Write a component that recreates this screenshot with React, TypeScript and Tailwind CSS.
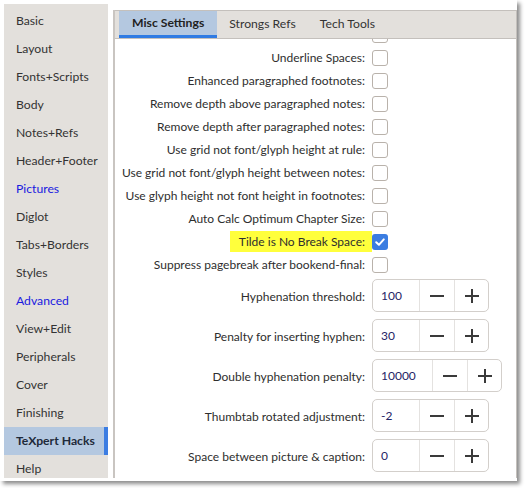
import React from "react";

const sideItems: { label: string; blue?: boolean; active?: boolean }[] = [
  { label: "Basic" },
  { label: "Layout" },
  { label: "Fonts+Scripts" },
  { label: "Body" },
  { label: "Notes+Refs" },
  { label: "Header+Footer" },
  { label: "Pictures", blue: true },
  { label: "Diglot" },
  { label: "Tabs+Borders" },
  { label: "Styles" },
  { label: "Advanced", blue: true },
  { label: "View+Edit" },
  { label: "Peripherals" },
  { label: "Cover" },
  { label: "Finishing" },
  { label: "TeXpert Hacks", active: true },
  { label: "Help" },
];

const checkRows: { label: string; checked?: boolean; highlight?: boolean }[] = [
  { label: "" },
  { label: "Underline Spaces:" },
  { label: "Enhanced paragraphed footnotes:" },
  { label: "Remove depth above paragraphed notes:" },
  { label: "Remove depth after paragraphed notes:" },
  { label: "Use grid not font/glyph height at rule:" },
  { label: "Use grid not font/glyph height between notes:" },
  { label: "Use glyph height not font height in footnotes:" },
  { label: "Auto Calc Optimum Chapter Size:" },
  { label: "Tilde is No Break Space:", checked: true, highlight: true },
  { label: "Suppress pagebreak after bookend-final:" },
];

const spinRows: { label: string; value: string; wide?: boolean }[] = [
  { label: "Hyphenation threshold:", value: "100" },
  { label: "Penalty for inserting hyphen:", value: "30" },
  { label: "Double hyphenation penalty:", value: "10000", wide: true },
  { label: "Thumbtab rotated adjustment:", value: "-2" },
  { label: "Space between picture & caption:", value: "0" },
];

function Checkbox({ checked }: { checked?: boolean }) {
  if (checked) {
    return (
      <div className="w-[16px] h-[16px] rounded-[3px] bg-[#3b7de1] flex items-center justify-center shrink-0">
        <svg width="12" height="12" viewBox="0 0 12 12">
          <path d="M2.2 6.2 L4.9 8.8 L9.8 3.4" fill="none" stroke="#ffffff" strokeWidth="2" strokeLinecap="round" strokeLinejoin="round" />
        </svg>
      </div>
    );
  }
  return <div className="w-[16px] h-[16px] rounded-[3px] border border-[#b9b2ab] bg-white shrink-0" />;
}

function Minus() {
  return (
    <svg width="16" height="16" viewBox="0 0 16 16">
      <path d="M1 8 H15" stroke="#3a3a3a" strokeWidth="2" />
    </svg>
  );
}
function Plus() {
  return (
    <svg width="16" height="16" viewBox="0 0 16 16">
      <path d="M1 8 H15 M8 1 V15" stroke="#3a3a3a" strokeWidth="2" />
    </svg>
  );
}

export default function App() {
  return (
    <div className="w-[526px] h-[488px] bg-white font-['Lato','Noto_Sans',sans-serif] text-[#2e2e2e] text-[12px] overflow-hidden whitespace-nowrap">
      <div className="w-[517px] h-[481px] bg-white shadow-[3px_3px_4px_rgba(0,0,0,0.45)] flex pl-[4px] pt-[4px] pb-[3px]">
        {/* Sidebar */}
        <div className="w-[104px] bg-[#e3e0dc] pt-[3px] flex flex-col shrink-0 overflow-hidden">
          {sideItems.map((it) => (
            <div
              key={it.label}
              className={
                "h-[28px] shrink-0 flex items-center pl-[12px] relative text-[12.2px] " +
                (it.active ? "bg-[#b4c8e0] font-bold text-[#1e2a3a]" : it.blue ? "text-[#1a1ae0]" : "text-[#333333]")
              }
            >
              {it.label}
              {it.active && <div className="absolute right-0 top-0 bottom-0 w-[4px] bg-[#3c7de2]" />}
            </div>
          ))}
        </div>
        <div className="w-[5px] shrink-0" />
        {/* Main panel */}
        <div className="flex-1 mt-[6px] flex flex-col border-l-2 border-l-[#c9c5c1] border-r border-r-[#c4c0bc] overflow-hidden">
          <div className="h-[29px] bg-[#e3e0dc] border-t border-t-[#c4c0bc] border-b border-b-[#c4c0bc] flex pl-[4px] shrink-0 text-[12.2px]">
            <div className="h-[27px] px-[13px] bg-[#b4c8e0] font-bold text-[#222222] flex items-center border-b-[3px] border-b-[#2f7be3]">
              Misc Settings
            </div>
            <div className="h-[27px] px-[12px] flex items-center text-[#333333]">Strongs Refs</div>
            <div className="h-[27px] px-[12px] flex items-center text-[#333333]">Tech Tools</div>
          </div>
          <div className="flex-1 overflow-hidden bg-white">
            <div className="mt-[-16px] flex flex-col">
              {checkRows.map((r, i) => (
                <div key={i} className="h-[23px] flex items-center">
                  <div className="w-[257px] flex justify-end shrink-0">
                    <span
                      className={
                        "h-[21px] flex items-center pr-[7px] pt-[1px] " + (r.highlight ? "bg-[#ffff3c] pl-[9px]" : "")
                      }
                    >
                      {r.label}
                    </span>
                  </div>
                  <Checkbox checked={r.checked} />
                </div>
              ))}
              <div className="mt-[3px] flex flex-col gap-[7px]">
                {spinRows.map((r) => (
                  <div key={r.label} className="h-[33px] flex items-center">
                    <div className="w-[257px] pr-[7px] pt-[2px] text-right shrink-0">{r.label}</div>
                    <div className="h-[33px] flex border border-[#d3cfcb] rounded-[5px] bg-white">
                      <div className={(r.wide ? "w-[59px]" : "w-[46px]") + " flex items-center pl-[8px] pt-[1px] text-[#1f2466]"}>
                        {r.value}
                      </div>
                      <div className="w-[35px] border-l border-l-[#e4e2e0] flex items-center justify-center">
                        <Minus />
                      </div>
                      <div className="w-[34px] border-l border-l-[#e4e2e0] flex items-center justify-center">
                        <Plus />
                      </div>
                    </div>
                  </div>
                ))}
              </div>
            </div>
          </div>
        </div>
      </div>
    </div>
  );
}
